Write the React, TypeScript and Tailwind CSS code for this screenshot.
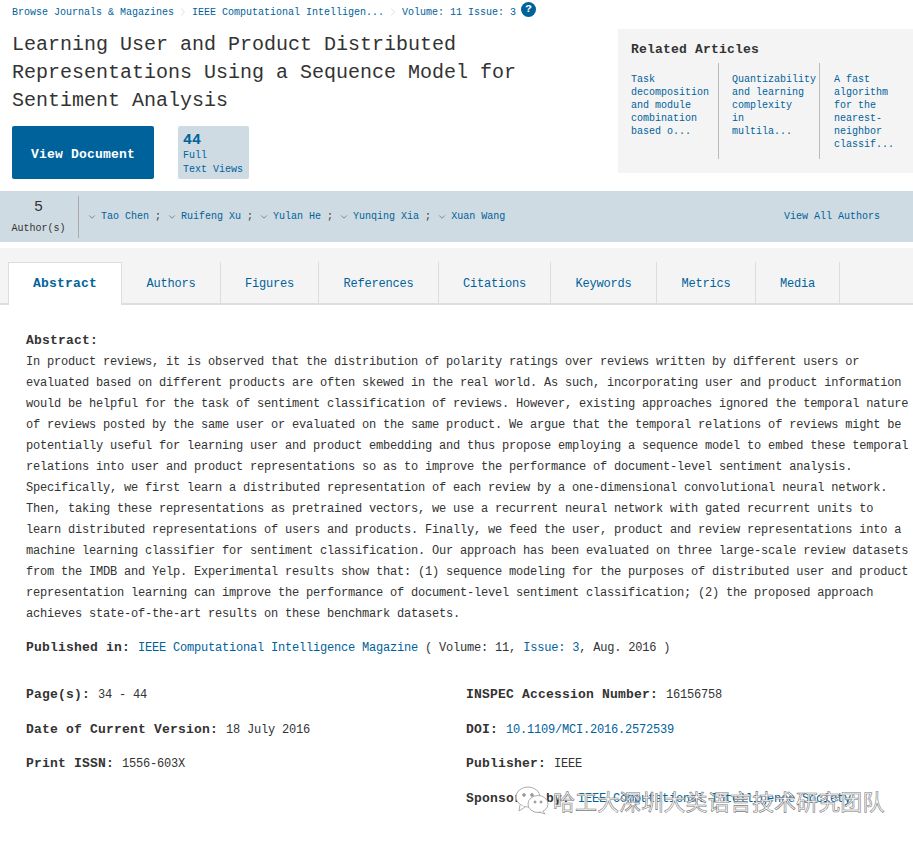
// App.tsx
// IEEE Xplore の論文ページ（Abstract タブ）の再現。

import { ChevronDown, ChevronRight } from "lucide-react";

const authors = ["Tao Chen", "Ruifeng Xu", "Yulan He", "Yunqing Xia", "Xuan Wang"];

const tabs = [
  { label: "Authors", width: "w-[99px]" },
  { label: "Figures", width: "w-[98px]" },
  { label: "References", width: "w-[120px]" },
  { label: "Citations", width: "w-[112px]" },
  { label: "Keywords", width: "w-[106px]" },
  { label: "Metrics", width: "w-[99px]" },
  { label: "Media", width: "w-[84px]" },
];

const abstractLines = [
  "In product reviews, it is observed that the distribution of polarity ratings over reviews written by different users or",
  "evaluated based on different products are often skewed in the real world. As such, incorporating user and product information",
  "would be helpful for the task of sentiment classification of reviews. However, existing approaches ignored the temporal nature",
  "of reviews posted by the same user or evaluated on the same product. We argue that the temporal relations of reviews might be",
  "potentially useful for learning user and product embedding and thus propose employing a sequence model to embed these temporal",
  "relations into user and product representations so as to improve the performance of document-level sentiment analysis.",
  "Specifically, we first learn a distributed representation of each review by a one-dimensional convolutional neural network.",
  "Then, taking these representations as pretrained vectors, we use a recurrent neural network with gated recurrent units to",
  "learn distributed representations of users and products. Finally, we feed the user, product and review representations into a",
  "machine learning classifier for sentiment classification. Our approach has been evaluated on three large-scale review datasets",
  "from the IMDB and Yelp. Experimental results show that: (1) sequence modeling for the purposes of distributed user and product",
  "representation learning can improve the performance of document-level sentiment classification; (2) the proposed approach",
  "achieves state-of-the-art results on these benchmark datasets.",
];

const related = [
  { title: "Task\ndecomposition\nand module\ncombination\nbased o...", box: "w-[88px] border-r border-[#bbb]" },
  { title: "Quantizability\nand learning\ncomplexity\nin\nmultila...", box: "w-[101px] border-r border-[#bbb] pl-[13px]" },
  { title: "A fast\nalgorithm\nfor the\nnearest-\nneighbor\nclassif...", box: "w-[75px] pl-[14px]" },
];

function Meta({ label, value, link }: { label: string; value: string; link?: boolean }) {
  return (
    <div className="h-[34.6px] whitespace-nowrap">
      <span className="text-[13px] font-bold tracking-[0.2px]">{label}: </span>
      <span className={link ? "text-[#00629b]" : ""}>{value}</span>
    </div>
  );
}

export default function App() {
  return (
    <div className="relative h-[841px] w-[913px] overflow-hidden bg-white font-['Liberation_Mono',monospace] text-[#333]">
      {/* ヘッダー */}
      <div className="flex h-[191px] justify-between">
        <div className="pl-3">
          <div className="flex h-[24px] items-center text-[10px] text-[#00629b]">
            <span>Browse Journals &amp; Magazines</span>
            <ChevronRight className="mx-[3px] h-3 w-3 text-[#bbb]" strokeWidth={1} />
            <span>IEEE Computational Intelligen...</span>
            <ChevronRight className="mx-[3px] h-3 w-3 text-[#bbb]" strokeWidth={1} />
            <span>Volume: 11 Issue: 3</span>
            <span className="mb-[5px] ml-[5px] flex h-[15px] w-[15px] items-center justify-center rounded-full bg-[#00629b] text-[11px] font-bold text-white">
              ?
            </span>
          </div>
          <h1 className="pt-[7px] text-[20px] leading-[28px] font-normal text-[#333]">
            Learning User and Product Distributed
            <br />
            Representations Using a Sequence Model for
            <br />
            Sentiment Analysis
          </h1>
          <div className="mt-[11px] flex gap-6">
            <div className="flex h-[53px] w-[142px] items-center justify-center rounded-[2px] bg-[#00629b] pt-[4px] text-[13px] font-bold tracking-[0.2px] text-white">
              View Document
            </div>
            <div className="h-[53px] w-[71px] rounded-[2px] bg-[#cedbe3] px-[5px] pt-[7px] text-[#00629b]">
              <div className="text-[15px] leading-[16px] font-bold">44</div>
              <div className="text-[10px] leading-[14px]">
                Full
                <br />
                Text Views
              </div>
            </div>
          </div>
        </div>
        <div className="mt-[29px] h-[144px] w-[295px] bg-[#f4f4f4] pt-[14px] pl-[13px]">
          <div className="text-[13px] leading-[14px] font-bold tracking-[0.2px]">Related Articles</div>
          <div className="mt-[6px] flex">
            {related.map((r) => (
              <div
                key={r.title}
                className={`h-[96px] ${r.box} whitespace-pre-line pt-[10px] text-[10px] leading-[13px] text-[#00629b]`}
              >
                {r.title}
              </div>
            ))}
          </div>
        </div>
      </div>

      {/* 著者バー */}
      <div className="flex h-[51px] items-center justify-between bg-[#cedbe3] pr-[33px]">
        <div className="flex h-full items-center">
          <div className="mt-[1px] flex h-[42px] w-[79px] flex-col items-center border-r border-[#aaa] pr-[1px]">
            <div className="pt-[2px] text-[15px] leading-[20px]">5</div>
            <div className="mt-[4px] text-[10px] leading-[14px]">Author(s)</div>
          </div>
          <div className="ml-[8px] flex items-center text-[10px] text-[#00629b]">
            {authors.map((a, i) => (
              <span key={a} className="flex items-center">
                <ChevronDown className="mr-[4px] h-[10px] w-[10px] text-[#777]" strokeWidth={2} />
                <span>{a}</span>
                {i < authors.length - 1 && <span className="mr-[6px] ml-[6px] text-[#333]">;</span>}
              </span>
            ))}
          </div>
        </div>
        <div className="text-[10px] text-[#00629b]">View All Authors</div>
      </div>

      {/* タブ */}
      <div className="mt-[6px] flex h-[57px] items-end border-b-2 border-[#ddd] bg-[#f4f4f4] pl-2 text-[12px] tracking-[-0.2px] text-[#00629b]">
        <div className="-mb-[2px] flex h-[43px] w-[114px] items-center justify-center border-x border-t border-[#ddd] bg-white text-[13px] font-bold tracking-[0.2px]">
          Abstract
        </div>
        {tabs.map((t) => (
          <div
            key={t.label}
            className={`flex h-[41px] ${t.width} items-center justify-center border-r border-[#ddd] pt-[2px]`}
          >
            {t.label}
          </div>
        ))}
      </div>

      {/* 本文 */}
      <div className="px-[26px] pt-[25px] text-[12px] leading-[21px] tracking-[-0.2px]">
        <div className="h-[22px] text-[13px] font-bold tracking-[0.2px]">Abstract:</div>
        {abstractLines.map((l) => (
          <div key={l} className="whitespace-nowrap">
            {l}
          </div>
        ))}
        <div className="mt-[12px] whitespace-nowrap">
          <span className="text-[13px] font-bold tracking-[0.2px]">Published in: </span>
          <span className="text-[#00629b]">IEEE Computational Intelligence Magazine</span> ( Volume: 11,{" "}
          <span className="text-[#00629b]">Issue: 3</span>, Aug. 2016 )
        </div>
        <div className="mt-[25px] grid grid-cols-[440px_1fr]">
          <div>
            <Meta label="Page(s)" value="34 - 44" />
            <Meta label="Date of Current Version" value="18 July 2016" />
            <Meta label="Print ISSN" value="1556-603X" />
          </div>
          <div>
            <Meta label="INSPEC Accession Number" value="16156758" />
            <Meta label="DOI" value="10.1109/MCI.2016.2572539" link />
            <Meta label="Publisher" value="IEEE" />
            <Meta label="Sponsored by" value="IEEE Computational Intelligence Society" link />
          </div>
        </div>
      </div>

      {/* 透かし */}
      <div className="absolute top-[785px] left-[514px] flex items-center gap-[3px] font-['Noto_Sans_CJK_SC',sans-serif] text-[22px] leading-[30px] tracking-[0.1px] text-white [-webkit-text-stroke:0.6px_#7a7a7a]">
        <svg viewBox="0 0 36 30" className="h-[30px] w-[36px]" fill="white" stroke="#999" strokeWidth="0.8">
          <ellipse cx="14" cy="12" rx="12" ry="10" />
          <path d="M6 20 L5 26 L11 22" />
          <ellipse cx="24" cy="19" rx="10" ry="8.5" />
          <path d="M29 26 L31 29 L25 27" />
          <circle cx="10" cy="10" r="1.4" fill="#999" />
          <circle cx="18" cy="10" r="1.4" fill="#999" />
          <circle cx="21" cy="17" r="1.1" fill="#999" />
          <circle cx="27" cy="17" r="1.1" fill="#999" />
        </svg>
        <span>哈工大深圳大类语言技术研究团队</span>
      </div>
    </div>
  );
}
